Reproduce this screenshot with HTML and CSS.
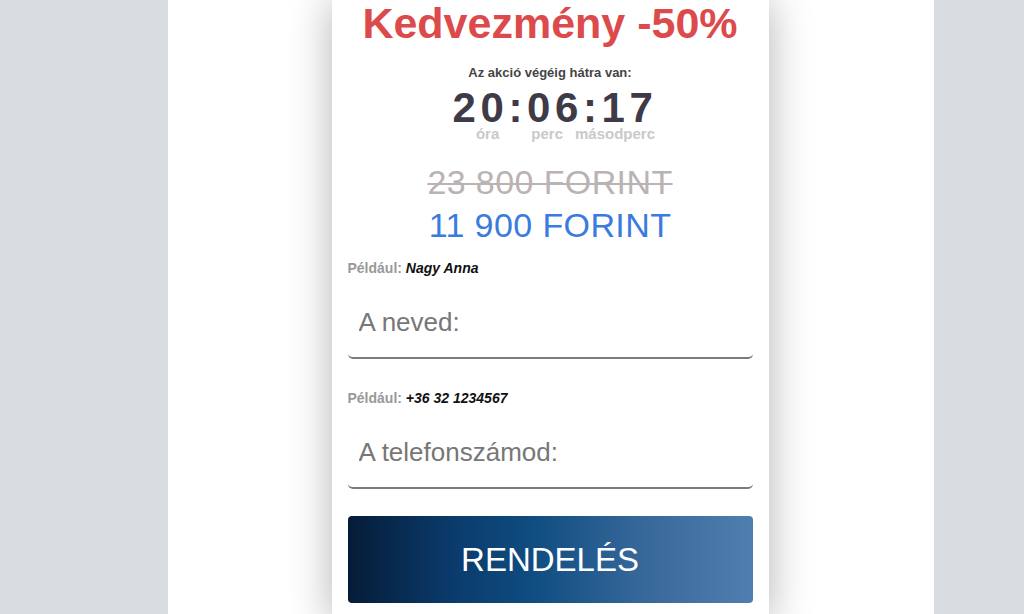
FILE: index.html
```html
<!DOCTYPE html>
<html lang="hu">
<head>
<meta charset="utf-8">
<title>Kedvezmény</title>
<link rel="stylesheet" href="styles.css">
</head>
<body>
<div class="page">
  <main class="card">
    <h1 class="title">Kedvezmény -50%</h1>
    <p class="countdown-caption">Az akció végéig hátra van:</p>
    <div class="timer">20:06:17</div>
    <div class="timer-labels"><span class="lbl-h">óra</span><span class="lbl-m">perc</span><span class="lbl-s">másodperc</span></div>
    <div class="price-old">23 800 FORINT</div>
    <div class="price-new">11 900 FORINT</div>
    <form class="order-form">
      <div class="field">
        <div class="hint"><span class="hint-label">Például:</span> <em class="hint-example">Nagy Anna</em></div>
        <input class="text-input" type="text" placeholder="A neved:">
      </div>
      <div class="field">
        <div class="hint"><span class="hint-label">Például:</span> <em class="hint-example">+36 32 1234567</em></div>
        <input class="text-input" type="tel" placeholder="A telefonszámod:">
      </div>
      <button class="order-btn" type="button">RENDELÉS</button>
    </form>
  </main>
</div>
</body>
</html>
```
FILE: styles.css
```css
html, body {
  margin: 0;
  padding: 0;
}
body {
  background: #d9dce1;
  font-family: "Liberation Sans", Arial, sans-serif;
  height: 614px;
  overflow: hidden;
}
.page {
  margin-left: 168px;
  width: 764px;
  padding-right: 2px;
  min-height: 614px;
  background: #fff;
  overflow: hidden;
}
.card {
  width: 405px;
  margin: 0 auto;
  padding: 0 16px 20px;
  background: #fff;
  box-shadow: 0 0 40px rgba(0, 0, 0, 0.3);
  text-align: center;
}
.title {
  margin: 0;
  font-size: 43px;
  line-height: 46px;
  font-weight: bold;
  color: #dc4a4b;
}
.countdown-caption {
  margin: 20px 0 0;
  font-size: 13px;
  line-height: 14px;
  font-weight: bold;
  color: #444;
}
.timer {
  margin-top: 9px;
  font-size: 42px;
  line-height: 38px;
  font-weight: bold;
  color: #3e3a48;
  letter-spacing: 4.6px;
  padding-left: 10px;
}
.timer-labels {
  font-size: 15px;
  line-height: 14px;
  font-weight: bold;
  color: #c9c9c9;
  padding-left: 31px;
}
.lbl-m {
  margin-left: 32px;
}
.lbl-s {
  margin-left: 12px;
}
.price-old {
  margin-top: 20px;
  font-size: 34px;
  line-height: 43px;
  letter-spacing: 0.4px;
  color: #bab3b3;
  text-decoration: line-through;
  text-decoration-thickness: 2px;
}
.price-new {
  font-size: 34px;
  line-height: 43px;
  letter-spacing: 0.4px;
  color: #3a7be0;
}
.order-form {
  margin-top: 13px;
  text-align: left;
}
.field {
  margin-bottom: 31px;
}
.hint {
  font-size: 14px;
  line-height: 16px;
  font-weight: bold;
  color: #999;
}
.hint-example {
  color: #111;
  font-style: italic;
}
.text-input {
  display: block;
  box-sizing: border-box;
  width: 100%;
  height: 71px;
  margin-top: 12px;
  padding: 0 11px;
  border: none;
  border-bottom: 2px solid #7b7b7b;
  border-radius: 5px;
  background: #fff;
  font-family: "Liberation Sans", Arial, sans-serif;
  font-size: 26px;
  color: #333;
  outline: none;
}
.text-input::placeholder {
  color: #777;
  opacity: 1;
}
.order-btn {
  display: block;
  width: 100%;
  height: 87px;
  margin-top: -4px;
  border: none;
  border-radius: 4px;
  background: linear-gradient(to right, #051c37 0%, #0a3a6a 25%, #0f4c80 45%, #3a6a9c 75%, #4f7fae 100%);
  color: #fff;
  font-family: "Liberation Sans", Arial, sans-serif;
  font-size: 33px;
  cursor: pointer;
}
```
